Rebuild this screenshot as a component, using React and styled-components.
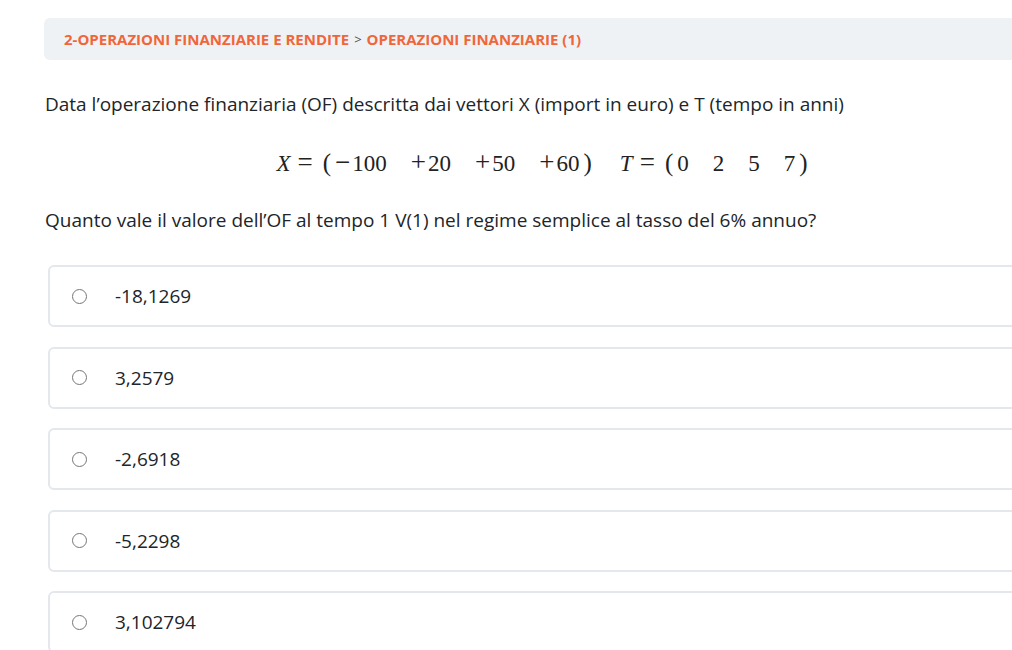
import React from 'react';
import styled, { createGlobalStyle } from 'styled-components';

const GlobalStyle = createGlobalStyle`
  body {
    margin: 0;
    background: #fff;
    overflow: hidden;
    font-family: "Open Sans", "Noto Sans", sans-serif;
    color: #212529;
  }
`;

const answers = ['-18,1269', '3,2579', '-2,6918', '-5,2298', '3,102794'];
const xValues = [['\u2212', '100'], ['+', '20'], ['+', '50'], ['+', '60']];
const tValues = [['', '0'], ['', '2'], ['', '5'], ['', '7']];

const Vector = ({ name, values }) => (
  <>
    <Var>{name}</Var>
    <Op>=</Op>
    <Paren>(</Paren>
    <Matrix>
      {values.map(([sign, num]) => (
        <Cell key={num}>
          {sign && <Sign>{sign}</Sign>}
          {num}
        </Cell>
      ))}
    </Matrix>
    <Paren>)</Paren>
  </>
);

const App = () => (
  <Page>
    <GlobalStyle />
    <Breadcrumb>
      <Crumb>2-OPERAZIONI FINANZIARIE E RENDITE</Crumb>
      <Sep>&gt;</Sep>
      <Crumb>OPERAZIONI FINANZIARIE (1)</Crumb>
    </Breadcrumb>
    <Paragraph>
      Data l’operazione finanziaria (OF) descritta dai vettori X (import in euro) e T (tempo in anni)
    </Paragraph>
    <MathRow>
      <Vector name="X" values={xValues} />
      <Spacer />
      <Vector name="T" values={tValues} />
    </MathRow>
    <Paragraph $top={26}>
      Quanto vale il valore dell’OF al tempo 1 V(1) nel regime semplice al tasso del 6% annuo?
    </Paragraph>
    <Options>
      {answers.map((a) => (
        <Option key={a}>
          <Radio />
          <OptionText>{a}</OptionText>
        </Option>
      ))}
    </Options>
  </Page>
);

export default App;

const Page = styled.div`
  width: 1000px;
  margin-left: 44px;
  padding-top: 18px;
`;

const Breadcrumb = styled.div`
  display: flex;
  align-items: center;
  gap: 5px;
  height: 42px;
  padding: 0 20px;
  background: #eff2f5;
  border-radius: 6px;
  font-size: 15px;
`;

const Crumb = styled.span`
  font-weight: 700;
  color: #f0663a;
`;

const Sep = styled.span`
  color: #495057;
  font-size: 13px;
`;

const Paragraph = styled.p`
  margin: 0;
  font-size: 19px;
  line-height: 24px;
  padding-top: ${(p) => p.$top ?? 32}px;
  padding-left: 1px;
`;

const MathRow = styled.div`
  display: flex;
  justify-content: center;
  align-items: baseline;
  margin: 26px 0 0;
  height: 40px;
  line-height: 40px;
  font-family: "Liberation Serif", "DejaVu Serif", serif;
  font-size: 23px;
  color: #222;
`;

const Var = styled.span`
  font-style: italic;
`;

const Op = styled.span`
  font-size: 27px;
  margin: 0 6px 0 7px;
`;

const Paren = styled.span`
  font-size: 25px;
  margin: 0 4px;
`;

const Matrix = styled.span`
  display: flex;
  align-items: baseline;
  gap: 24px;
`;

const Cell = styled.span`
  display: flex;
  align-items: baseline;
`;

const Sign = styled.span`
  font-size: 27px;
  margin-right: 2px;
`;

const Spacer = styled.span`
  width: 24px;
`;

const Options = styled.div`
  display: flex;
  flex-direction: column;
  gap: 19.5px;
  margin: 33px 0 0 4px;
`;

const Option = styled.div`
  display: flex;
  align-items: center;
  height: 62px;
  border: 2px solid #e4e7eb;
  border-radius: 6px;
  padding-left: 22px;
  box-sizing: border-box;
`;

const Radio = styled.span`
  width: 13px;
  height: 13px;
  border: 1.5px solid #767676;
  border-radius: 50%;
  flex-shrink: 0;
`;

const OptionText = styled.span`
  margin-left: 28px;
  font-size: 19px;
`;
